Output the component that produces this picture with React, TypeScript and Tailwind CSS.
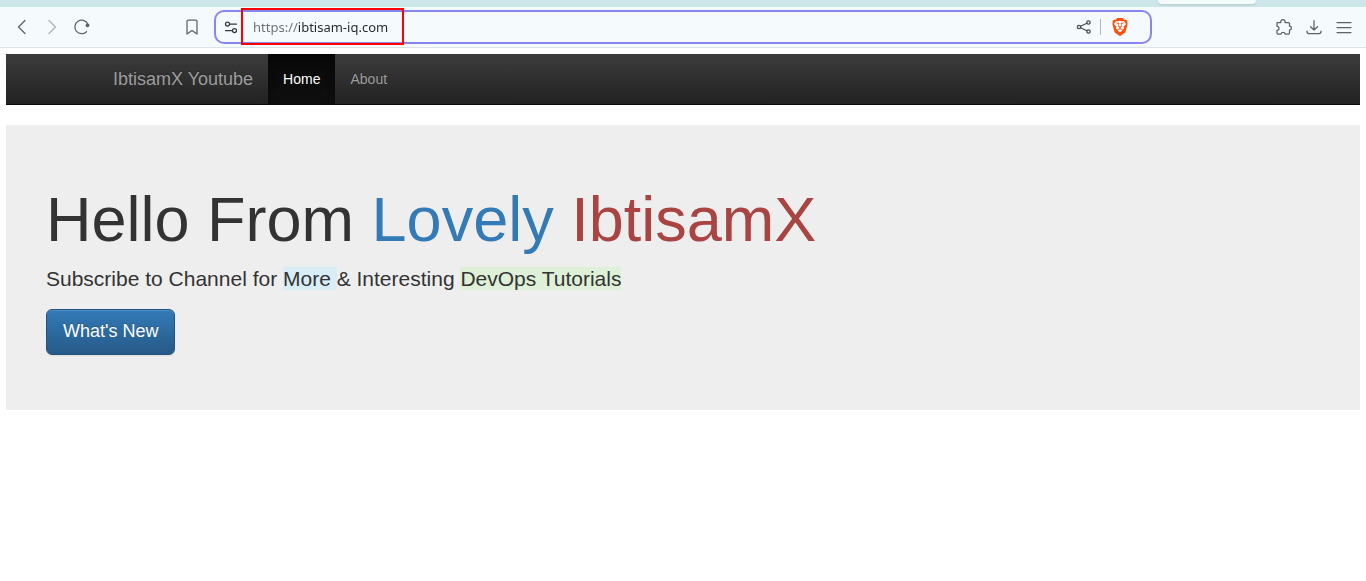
import type { ReactNode } from "react";
import { SiBrave } from "react-icons/si";

function ToolButton({ label, children, className = "text-[#5c6266]" }: { label: string; children: ReactNode; className?: string }) {
  return (
    <button type="button" aria-label={label} className={`flex size-5 shrink-0 items-center justify-center ${className}`}>
      <svg viewBox="0 0 20 20" fill="none" stroke="currentColor" strokeWidth="1.25" strokeLinecap="round" strokeLinejoin="round" className="size-5">
        {children}
      </svg>
    </button>
  );
}

function BrowserBar() {
  return (
    <header>
      <div className="flex h-[7px] justify-end bg-[#cde6ea] pr-[110px]">
        <div className="h-1 w-[98px] rounded-b-lg bg-[#f5fafd] shadow-sm" />
      </div>
      <div className="flex h-[41px] items-center gap-3 border-b border-[#dce4e6] bg-[#f5fafd] px-3">
        <div className="flex w-[190px] shrink-0 items-center gap-[10px]">
          <ToolButton label="Back">
            <path d="m13 3.5-6.500 6.500 6.500 6.500" />
          </ToolButton>
          <ToolButton label="Forward" className="text-[#5c6266] opacity-45">
            <path d="m7 3.500 6.500 6.500-6.500 6.500" />
          </ToolButton>
          <ToolButton label="Reload">
            <path d="M14.500 14.700A6.800 6.800 0 1 1 15.800 7" />
            <circle cx="15.500" cy="8.300" r="1.900" fill="currentColor" stroke="none" />
          </ToolButton>
          <ToolButton label="Bookmark" className="ml-auto text-[#5c6266]">
            <path d="M5 4.300Q5 3 6.300 3h7.400Q15 3 15 4.300V17l-5-3.500L5 17z" />
          </ToolButton>
        </div>
        <div className="flex h-[34px] min-w-0 flex-1 items-center rounded-[10px] border-2 border-[#8785ee] pr-5">
          <ToolButton label="Site settings" className="ml-[5px] text-[#34393c]">
            <circle cx="6.500" cy="7" r="2" />
            <path d="M9 7h6.500M4.500 13.500H11" />
            <circle cx="13.500" cy="13.500" r="2" />
          </ToolButton>
          <div className="mb-px flex h-[37px] w-[163px] items-center border-2 border-[#ff0000] px-[10px]">
            <input
              type="text"
              aria-label="Address"
              defaultValue="https://ibtisam-iq.com"
              className="w-full bg-[linear-gradient(90deg,#6a6e70_45px,#25282a_45px)] bg-clip-text font-['Noto_Sans',sans-serif] text-[13px] leading-5 text-transparent caret-black outline-none"
            />
          </div>
          <div className="ml-auto flex items-center gap-[6px]">
            <ToolButton label="Share" className="text-[#474c4f]">
              <circle cx="5" cy="10" r="1.700" />
              <circle cx="14.500" cy="5.500" r="1.700" />
              <circle cx="14.500" cy="14.500" r="1.700" />
              <path d="m6.600 9.200 6.300-3M6.600 10.800l6.300 3" />
            </ToolButton>
            <div className="h-4 w-px bg-[#b2b6b8]" />
            <button type="button" aria-label="Brave Shields" className="ml-1 mr-px">
              <SiBrave className="size-[18px] text-[#ff4f0f]" />
            </button>
          </div>
        </div>
        <div className="flex w-[190px] shrink-0 items-center justify-end gap-[10px]">
          <ToolButton label="Extensions">
            <path d="M3.500 5.500h3.300a2.200 2.200 0 1 1 4.200 0h3.500q1 0 1 1v2.700a1.900 1.900 0 0 1 0 3.800v3q0 1-1 1h-3.300a2.200 2.200 0 0 0-4.200 0H4q-1 0-1-1v-2.700a2 2 0 0 0 0-4V6q0-.5.5-.5z" />
          </ToolButton>
          <ToolButton label="Downloads">
            <path d="M10 3.500v9.500M6.500 9.700 10 13l3.500-3.300M3 14v.500q0 2 2 2h10q2 0 2-2V14" />
          </ToolButton>
          <ToolButton label="Menu">
            <path d="M3 5.500h14M3 10.500h14M3 15.500h14" />
          </ToolButton>
        </div>
      </div>
    </header>
  );
}

function Navbar() {
  return (
    <nav className="border-b border-[#080808] bg-linear-to-b from-[#3c3c3c] to-[#222222]">
      <div className="mx-auto flex max-w-[1170px] items-stretch text-sm leading-5 text-[#9d9d9d] [text-shadow:0_-1px_0_rgba(0,0,0,0.25)]">
        <a href="#top" className="p-[15px] text-lg leading-5">IbtisamX Youtube</a>
        <a href="#home" aria-current="page" className="bg-linear-to-b from-[#080808] to-[#0f0f0f] p-[15px] text-white shadow-[inset_0_3px_9px_rgba(0,0,0,0.25)]">
          Home
        </a>
        <a href="#about" className="p-[15px]">About</a>
      </div>
    </nav>
  );
}

export default function App() {
  return (
    <div className="min-h-screen bg-white font-['Liberation_Sans',Arial,sans-serif] text-[#333333]">
      <BrowserBar />
      <div className="px-[6px] pt-[6px]">
        <Navbar />
        <main className="mt-5 bg-[#eeeeee] px-10 pb-[55px] pt-[60px]">
          <h1 className="text-[63px] leading-[68px]">
            Hello From <span className="text-[#337ab7]">Lovely</span> <span className="text-[#a94442]">IbtisamX</span>
          </h1>
          <p className="mt-[11px] text-[21px] leading-[29px]">
            Subscribe to Channel for <span className="bg-[#d9edf7]">More </span>&amp; Interesting{" "}
            <span className="bg-[#dff0d8]">DevOps Tutorials</span>
          </p>
          <a
            href="#new"
            className="mt-4 inline-block rounded-md border border-[#245580] bg-linear-to-b from-[#337ab7] to-[#265a88] px-4 pb-[11px] pt-[9px] align-top text-lg leading-6 text-white shadow-[inset_0_1px_0_rgba(255,255,255,0.15),0_1px_1px_rgba(0,0,0,0.075)] [text-shadow:0_-1px_0_rgba(0,0,0,0.2)]"
          >
            What's New
          </a>
        </main>
      </div>
    </div>
  );
}
